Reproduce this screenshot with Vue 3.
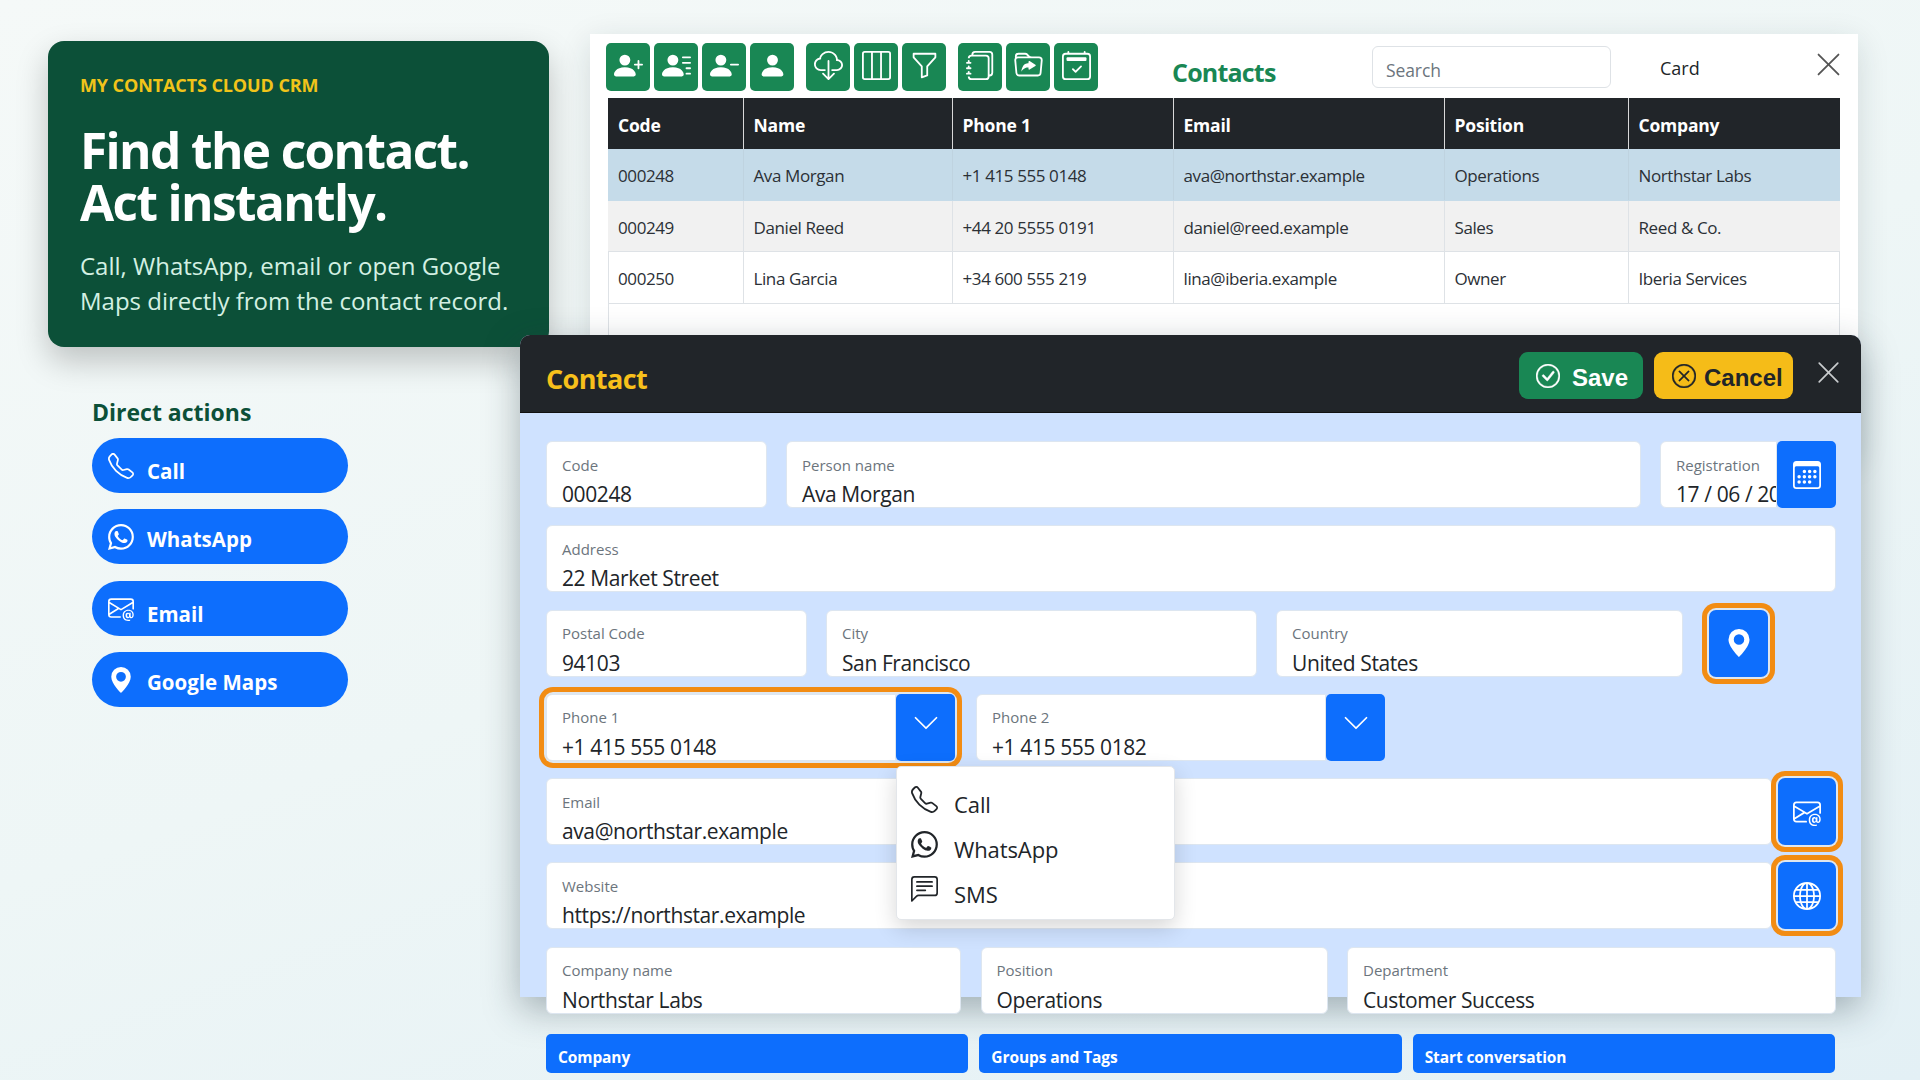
<script setup>
import { h } from "vue";

const circle = "M8 15A7 7 0 1 1 8 1a7 7 0 0 1 0 14zm0 1A8 8 0 1 0 8 0a8 8 0 0 0 0 16z";
const personBase = "M1 14s-1 0-1-1 1-4 6-4 6 3 6 4-1 1-1 1H1zm5-6a3 3 0 1 0 0-6 3 3 0 0 0 0 6z";

const icons = {
  phone: ["M3.654 1.328a.678.678 0 0 0-1.015-.063L1.605 2.3c-.483.484-.661 1.169-.45 1.77a17.568 17.568 0 0 0 4.168 6.608 17.569 17.569 0 0 0 6.608 4.168c.601.211 1.286.033 1.77-.45l1.034-1.034a.678.678 0 0 0-.063-1.015l-2.307-1.794a.678.678 0 0 0-.58-.122l-2.19.547a1.745 1.745 0 0 1-1.657-.459L5.482 8.062a1.745 1.745 0 0 1-.46-1.657l.548-2.19a.678.678 0 0 0-.122-.58L3.654 1.328zM1.884.511a1.745 1.745 0 0 1 2.612.163L6.29 2.98c.329.423.445.974.315 1.494l-.547 2.19a.678.678 0 0 0 .178.643l2.457 2.457a.678.678 0 0 0 .644.178l2.189-.547a1.745 1.745 0 0 1 1.494.315l2.306 1.794c.829.645.905 1.87.163 2.611l-1.034 1.034c-.74.74-1.846 1.065-2.877.702a18.634 18.634 0 0 1-7.01-4.42 18.634 18.634 0 0 1-4.42-7.009c-.362-1.03-.037-2.137.703-2.877L1.885.511z"],
  whatsapp: ["M13.601 2.326A7.854 7.854 0 0 0 7.994 0C3.627 0 .068 3.558.064 7.926c0 1.399.366 2.76 1.057 3.965L0 16l4.204-1.102a7.933 7.933 0 0 0 3.79.965h.004c4.368 0 7.926-3.558 7.93-7.93A7.898 7.898 0 0 0 13.6 2.326zM7.994 14.521a6.573 6.573 0 0 1-3.356-.92l-.24-.144-2.494.654.666-2.433-.156-.251a6.56 6.56 0 0 1-1.007-3.505c0-3.626 2.957-6.584 6.591-6.584a6.56 6.56 0 0 1 4.66 1.931 6.557 6.557 0 0 1 1.928 4.66c-.004 3.639-2.961 6.592-6.592 6.592zm3.615-4.934c-.197-.099-1.17-.578-1.353-.646-.182-.065-.315-.099-.445.099-.133.197-.513.646-.627.775-.114.133-.232.148-.43.05-.197-.1-.836-.308-1.592-.985-.59-.525-.985-1.175-1.103-1.372-.114-.198-.011-.304.088-.403.087-.088.197-.232.296-.346.1-.114.133-.198.198-.33.065-.134.034-.248-.015-.347-.05-.099-.445-1.076-.612-1.47-.16-.389-.323-.335-.445-.34-.114-.007-.247-.007-.38-.007a.729.729 0 0 0-.529.247c-.182.198-.691.677-.691 1.654 0 .977.71 1.916.81 2.049.098.133 1.394 2.132 3.383 2.992.47.205.84.326 1.129.418.475.152.904.129 1.246.08.38-.058 1.171-.48 1.338-.943.164-.464.164-.86.114-.943-.049-.084-.182-.133-.38-.232z"],
  email: [
    "M2 2a2 2 0 0 0-2 2v8.01A2 2 0 0 0 2 14h5.5a.5.5 0 0 0 0-1H2a1 1 0 0 1-.966-.741l5.64-3.471L8 9.583l7-4.2V8.5a.5.5 0 0 0 1 0V4a2 2 0 0 0-2-2H2Zm3.708 6.208L1 11.105V5.383l4.708 2.825ZM1 4.217V4a1 1 0 0 1 1-1h12a1 1 0 0 1 1 1v.217l-7 4.2-7-4.2Z",
    "M14.247 14.269c1.01 0 1.587-.857 1.587-2.025v-.21C15.834 10.43 14.64 9 12.52 9h-.035C10.42 9 9 10.36 9 12.432v.214C9 14.82 10.438 16 12.358 16h.044c.594 0 1.018-.074 1.237-.175v-.73c-.245.11-.673.18-1.18.18h-.044c-1.334 0-2.571-.788-2.571-2.655v-.157c0-1.657 1.058-2.724 2.64-2.724h.04c1.535 0 2.484 1.05 2.484 2.326v.118c0 .975-.324 1.39-.639 1.39-.232 0-.41-.148-.41-.42v-2.19h-.906v.569h-.03c-.084-.298-.368-.63-.954-.63-.778 0-1.259.555-1.259 1.4v.528c0 .892.49 1.434 1.26 1.434.471 0 .896-.227 1.014-.643h.043c.118.42.617.648 1.12.648Zm-2.453-1.588v-.227c0-.546.227-.791.573-.791.297 0 .572.192.572.708v.367c0 .573-.253.744-.564.744-.354 0-.581-.215-.581-.8Z",
  ],
  pin: ["M8 16s6-5.686 6-10A6 6 0 0 0 2 6c0 4.314 6 10 6 10zm0-7a3 3 0 1 1 0-6 3 3 0 0 1 0 6z"],
  chevron: ["M1.646 4.646a.5.5 0 0 1 .708 0L8 10.293l5.646-5.647a.5.5 0 0 1 .708.708l-6 6a.5.5 0 0 1-.708 0l-6-6a.5.5 0 0 1 0-.708z"],
  close: ["M2.146 2.854a.5.5 0 1 1 .708-.708L8 7.293l5.146-5.147a.5.5 0 0 1 .708.708L8.707 8l5.147 5.146a.5.5 0 0 1-.708.708L8 8.707l-5.146 5.147a.5.5 0 0 1-.708-.708L7.293 8 2.146 2.854Z"],
  sms: [
    "M14 1a1 1 0 0 1 1 1v8a1 1 0 0 1-1 1H4.414A2 2 0 0 0 3 11.586l-2 2V2a1 1 0 0 1 1-1h12zM2 0a2 2 0 0 0-2 2v12.793a.5.5 0 0 0 .854.353l2.853-2.853A1 1 0 0 1 4.414 12H14a2 2 0 0 0 2-2V2a2 2 0 0 0-2-2H2z",
    "M3 3.5a.5.5 0 0 1 .5-.5h9a.5.5 0 0 1 0 1h-9a.5.5 0 0 1-.5-.5zM3 6a.5.5 0 0 1 .5-.5h9a.5.5 0 0 1 0 1h-9A.5.5 0 0 1 3 6zm0 2.5a.5.5 0 0 1 .5-.5h5a.5.5 0 0 1 0 1h-5a.5.5 0 0 1-.5-.5z",
  ],
  globe: ["M0 8a8 8 0 1 1 16 0A8 8 0 0 1 0 8zm7.5-6.923c-.67.204-1.335.82-1.887 1.855A7.97 7.97 0 0 0 5.145 4H7.5V1.077zM4.09 4a9.267 9.267 0 0 1 .64-1.539 6.7 6.7 0 0 1 .597-.933A7.025 7.025 0 0 0 2.255 4H4.09zm-.582 3.5c.03-.877.138-1.718.312-2.5H1.674a6.958 6.958 0 0 0-.656 2.5h2.49zM4.847 5a12.5 12.5 0 0 0-.338 2.5H7.5V5H4.847zM8.5 5v2.5h2.99a12.495 12.495 0 0 0-.337-2.5H8.5zM4.51 8.5a12.5 12.5 0 0 0 .337 2.5H7.5V8.5H4.51zm3.99 0V11h2.653c.187-.765.306-1.608.338-2.5H8.5zM5.145 12c.138.386.295.744.468 1.068.552 1.035 1.218 1.65 1.887 1.855V12H5.145zm.182 2.472a6.696 6.696 0 0 1-.597-.933A9.268 9.268 0 0 1 4.09 12H2.255a7.024 7.024 0 0 0 3.072 2.472zM3.82 11a13.652 13.652 0 0 1-.312-2.5h-2.49c.062.89.291 1.733.656 2.5H3.82zm6.853 3.472A7.024 7.024 0 0 0 13.745 12H11.91a9.27 9.27 0 0 1-.64 1.539 6.688 6.688 0 0 1-.597.933zM8.5 12v2.923c.67-.204 1.335-.82 1.887-1.855.173-.324.33-.682.468-1.068H8.5zm3.68-1h2.146c.365-.767.594-1.61.656-2.5h-2.49a13.65 13.65 0 0 1-.312 2.5zm2.802-3.5a6.959 6.959 0 0 0-.656-2.5H12.18c.174.782.282 1.623.312 2.5h2.49zM11.27 2.461c.247.464.462.98.64 1.539h1.835a7.024 7.024 0 0 0-3.072-2.472c.218.284.418.598.597.933zM10.855 4a7.966 7.966 0 0 0-.468-1.068C9.835 1.897 9.17 1.282 8.5 1.077V4h2.355z"],
  calendar: [
    "M14 0H2a2 2 0 0 0-2 2v12a2 2 0 0 0 2 2h12a2 2 0 0 0 2-2V2a2 2 0 0 0-2-2zM1 3.857C1 3.384 1.448 3 2 3h12c.552 0 1 .384 1 .857v10.286c0 .473-.448.857-1 .857H2c-.552 0-1-.384-1-.857V3.857z",
    "M6.5 7a1 1 0 1 0 0-2 1 1 0 0 0 0 2zm3 0a1 1 0 1 0 0-2 1 1 0 0 0 0 2zm3 0a1 1 0 1 0 0-2 1 1 0 0 0 0 2zm-9 3a1 1 0 1 0 0-2 1 1 0 0 0 0 2zm3 0a1 1 0 1 0 0-2 1 1 0 0 0 0 2zm3 0a1 1 0 1 0 0-2 1 1 0 0 0 0 2zm3 0a1 1 0 1 0 0-2 1 1 0 0 0 0 2zm-9 3a1 1 0 1 0 0-2 1 1 0 0 0 0 2zm3 0a1 1 0 1 0 0-2 1 1 0 0 0 0 2zm3 0a1 1 0 1 0 0-2 1 1 0 0 0 0 2z",
  ],
  check: [circle, "M10.97 4.97a.235.235 0 0 0-.02.022L7.477 9.417 5.384 7.323a.75.75 0 0 0-1.06 1.06L6.97 11.03a.75.75 0 0 0 1.079-.02l3.992-4.99a.75.75 0 0 0-1.071-1.05z"],
  cancel: [circle, "M4.646 4.646a.5.5 0 0 1 .708 0L8 7.293l2.646-2.647a.5.5 0 0 1 .708.708L8.707 8l2.647 2.646a.5.5 0 0 1-.708.708L8 8.707l-2.646 2.647a.5.5 0 0 1-.708-.708L7.293 8 4.646 5.354a.5.5 0 0 1 0-.708z"],
  personPlus: [personBase, "M13.5 5a.5.5 0 0 1 .5.5V7h1.5a.5.5 0 0 1 0 1H14v1.5a.5.5 0 0 1-1 0V8h-1.5a.5.5 0 0 1 0-1H13V5.5a.5.5 0 0 1 .5-.5z"],
  personLines: ["M6 8a3 3 0 1 0 0-6 3 3 0 0 0 0 6zm-5 6s-1 0-1-1 1-4 6-4 6 3 6 4-1 1-1 1H1zM11 3.5a.5.5 0 0 1 .5-.5h4a.5.5 0 0 1 0 1h-4a.5.5 0 0 1-.5-.5zm.5 2.5a.5.5 0 0 0 0 1h4a.5.5 0 0 0 0-1h-4zm2 3a.5.5 0 0 0 0 1h2a.5.5 0 0 0 0-1h-2zm0 3a.5.5 0 0 0 0 1h2a.5.5 0 0 0 0-1h-2z"],
  personDash: [personBase, "M11 7.5a.5.5 0 0 1 .5-.5h4a.5.5 0 0 1 0 1h-4a.5.5 0 0 1-.5-.5z"],
  person: ["M3 14s-1 0-1-1 1-4 6-4 6 3 6 4-1 1-1 1H3Zm5-6a3 3 0 1 0 0-6 3 3 0 0 0 0 6Z"],
  cloud: [
    "M4.406 1.342A5.53 5.53 0 0 1 8 0c2.69 0 4.923 2 5.166 4.579C14.758 4.804 16 6.137 16 7.773 16 9.569 14.502 11 12.687 11H10a.5.5 0 0 1 0-1h2.688C13.979 10 15 8.988 15 7.773c0-1.216-1.02-2.228-2.313-2.228h-.5v-.5C12.188 2.825 10.328 1 8 1a4.53 4.53 0 0 0-2.941 1.1c-.757.652-1.153 1.438-1.153 2.055v.448l-.445.049C2.064 4.805 1 5.952 1 7.318 1 8.785 2.23 10 3.781 10H6a.5.5 0 0 1 0 1H3.781C1.708 11 0 9.366 0 7.318c0-1.763 1.266-3.223 2.942-3.593.143-.863.698-1.723 1.464-2.383z",
    "M7.646 15.854a.5.5 0 0 0 .708 0l3-3a.5.5 0 0 0-.708-.708L8.5 14.293V5.5a.5.5 0 0 0-1 0v8.793l-2.146-2.147a.5.5 0 0 0-.708.708l3 3z",
  ],
  columns: ["M0 1.5A1.5 1.5 0 0 1 1.5 0h13A1.5 1.5 0 0 1 16 1.5v13a1.5 1.5 0 0 1-1.5 1.5h-13A1.5 1.5 0 0 1 0 14.5v-13zM1.5 1a.5.5 0 0 0-.5.5v13a.5.5 0 0 0 .5.5H5V1H1.5zM10 15V1H6v14h4zm1 0h3.5a.5.5 0 0 0 .5-.5v-13a.5.5 0 0 0-.5-.5H11v14z"],
  funnel: ["M1.5 1.5A.5.5 0 0 1 2 1h12a.5.5 0 0 1 .5.5v2a.5.5 0 0 1-.128.334L10 8.692V13.5a.5.5 0 0 1-.342.474l-3 1A.5.5 0 0 1 6 14.5V8.692L1.628 3.834A.5.5 0 0 1 1.5 3.5v-2zm1 .5v1.308l4.372 4.858A.5.5 0 0 1 7 8.5v5.306l2-.666V8.5a.5.5 0 0 1 .128-.334L13.5 3.308V2h-11z"],
  journals: [
    "M5 0h8a2 2 0 0 1 2 2v10a2 2 0 0 1-2 2 2 2 0 0 1-2 2H3a2 2 0 0 1-2-2h1a1 1 0 0 0 1 1h8a1 1 0 0 0 1-1V4a1 1 0 0 0-1-1H3a1 1 0 0 0-1 1H1a2 2 0 0 1 2-2h8a2 2 0 0 1 2 2v9a1 1 0 0 0 1-1V2a1 1 0 0 0-1-1H5a1 1 0 0 0-1 1H3a2 2 0 0 1 2-2z",
    "M1 6v-.5a.5.5 0 0 1 1 0V6h.5a.5.5 0 0 1 0 1h-2a.5.5 0 0 1 0-1H1zm0 3v-.5a.5.5 0 0 1 1 0V9h.5a.5.5 0 0 1 0 1h-2a.5.5 0 0 1 0-1H1zm0 2.5v.5H.5a.5.5 0 0 0 0 1h2a.5.5 0 0 0 0-1H2v-.5a.5.5 0 0 0-1 0z",
  ],
  folder: [
    "m11.798 8.271-3.182 1.97c-.27.166-.616-.036-.616-.372V9.1s-2.571-.3-4 2.4c.571-4.8 3.143-4.8 4-4.8v-.769c0-.336.346-.538.616-.371l3.182 1.969c.27.166.27.576 0 .742z",
    "m.5 3 .04.87a1.99 1.99 0 0 0-.342 1.311l.637 7A2 2 0 0 0 2.826 14h10.348a2 2 0 0 0 1.991-1.819l.637-7A2 2 0 0 0 13.81 3H9.828a2 2 0 0 1-1.414-.586l-.828-.828A2 2 0 0 0 6.172 1H2.5a2 2 0 0 0-2 2zm.694 2.09A1 1 0 0 1 2.19 4h11.62a1 1 0 0 1 .996 1.09l-.636 7a1 1 0 0 1-.996.91H2.826a1 1 0 0 1-.995-.91l-.637-7zM6.172 2a1 1 0 0 1 .707.293L7.586 3H2.19c-.24 0-.47.042-.683.12L1.5 2.98a1 1 0 0 1 1-.98h3.672z",
  ],
  calendarCheck: [
    "M10.854 8.146a.5.5 0 0 1 0 .708l-3 3a.5.5 0 0 1-.708 0l-1.5-1.5a.5.5 0 0 1 .708-.708L7.5 10.793l2.646-2.647a.5.5 0 0 1 .708 0z",
    "M3.5 0a.5.5 0 0 1 .5.5V1h8V.5a.5.5 0 0 1 1 0V1h1a2 2 0 0 1 2 2v11a2 2 0 0 1-2 2H2a2 2 0 0 1-2-2V3a2 2 0 0 1 2-2h1V.5a.5.5 0 0 1 .5-.5zM2 2a1 1 0 0 0-1 1v11a1 1 0 0 0 1 1h12a1 1 0 0 0 1-1V3a1 1 0 0 0-1-1H2z",
    "M2.5 4a.5.5 0 0 1 .5-.5h10a.5.5 0 0 1 .5.5v1a.5.5 0 0 1-.5.5H3a.5.5 0 0 1-.5-.5V4z",
  ],
};

const Bi = ({ name }) =>
  h(
    "svg",
    { viewBox: "0 0 16 16", fill: "currentColor" },
    icons[name].map((d) => h("path", { d }))
  );

const actions = [
  { label: "Call", icon: "phone", low: true },
  { label: "WhatsApp", icon: "whatsapp", low: false },
  { label: "Email", icon: "email", low: true },
  { label: "Google Maps", icon: "pin", low: false },
];

const toolGroups = [
  ["personPlus", "personLines", "personDash", "person"],
  ["cloud", "columns", "funnel"],
  ["journals", "folder", "calendarCheck"],
];

const columns = ["Code", "Name", "Phone 1", "Email", "Position", "Company"];
const colWidths = [135, 209, 221, 271, 184, 212];
const contacts = [
  ["000248", "Ava Morgan", "+1 415 555 0148", "ava@northstar.example", "Operations", "Northstar Labs"],
  ["000249", "Daniel Reed", "+44 20 5555 0191", "daniel@reed.example", "Sales", "Reed & Co."],
  ["000250", "Lina Garcia", "+34 600 555 219", "lina@iberia.example", "Owner", "Iberia Services"],
];

const phoneMenu = [
  { label: "Call", icon: "phone" },
  { label: "WhatsApp", icon: "whatsapp" },
  { label: "SMS", icon: "sms" },
];

const tabs = ["Company", "Groups and Tags", "Start conversation"];
</script>

<template>
  <div class="page">
    <aside class="left">
      <section class="hero">
        <div class="eyebrow">MY CONTACTS CLOUD CRM</div>
        <h1>Find the contact.<br />Act instantly.</h1>
        <p>Call, WhatsApp, email or open Google Maps directly from the contact record.</p>
      </section>

      <section class="direct">
        <h2>Direct actions</h2>
        <div class="direct-list">
          <button v-for="a in actions" :key="a.label" class="pill">
            <Bi :name="a.icon" class="pill-icon" />
            <span :class="{ low: a.low }">{{ a.label }}</span>
          </button>
        </div>
      </section>
    </aside>

    <main class="panel">
      <div class="toolbar">
        <div v-for="(group, i) in toolGroups" :key="i" class="tool-group">
          <button v-for="icon in group" :key="icon" class="tool">
            <Bi :name="icon" class="tool-icon" />
          </button>
        </div>
        <div class="panel-title">Contacts</div>
        <input class="search" type="text" placeholder="Search" />
        <span class="card-link">Card</span>
        <Bi name="close" class="panel-close" />
      </div>

      <div class="table-wrap">
        <table>
          <colgroup>
            <col v-for="(w, i) in colWidths" :key="i" :style="{ width: w + 'px' }" />
          </colgroup>
          <thead>
            <tr>
              <th v-for="c in columns" :key="c">{{ c }}</th>
            </tr>
          </thead>
          <tbody>
            <tr v-for="(row, i) in contacts" :key="row[0]" :class="'row-' + i">
              <td v-for="(cell, j) in row" :key="j">{{ cell }}</td>
            </tr>
          </tbody>
        </table>
      </div>
    </main>

    <div class="dialog-layer">
      <div class="dialog">
        <header class="dialog-head">
          <div class="dialog-title">Contact</div>
          <button class="btn-save"><Bi name="check" class="btn-icon" /><span>Save</span></button>
          <button class="btn-cancel"><Bi name="cancel" class="btn-icon" /><span>Cancel</span></button>
          <Bi name="close" class="dialog-close" />
        </header>

        <div class="form">
          <div class="row r1">
            <div class="field"><label>Code</label><span class="val">000248</span></div>
            <div class="field"><label>Person name</label><span class="val">Ava Morgan</span></div>
            <div class="group">
              <div class="field"><label>Registration</label><span class="val">17 / 06 / 2025</span></div>
              <button class="square"><Bi name="calendar" class="square-icon" /></button>
            </div>
          </div>

          <div class="row">
            <div class="field"><label>Address</label><span class="val">22 Market Street</span></div>
          </div>

          <div class="row r3">
            <div class="field"><label>Postal Code</label><span class="val">94103</span></div>
            <div class="field"><label>City</label><span class="val">San Francisco</span></div>
            <div class="field"><label>Country</label><span class="val">United States</span></div>
            <button class="square ringed map"><Bi name="pin" class="square-icon" /></button>
          </div>

          <div class="row r4">
            <div class="group ringed">
              <div class="field"><label>Phone 1</label><span class="val">+1 415 555 0148</span></div>
              <button class="square"><Bi name="chevron" class="square-icon chev" /></button>
              <div class="menu">
                <div v-for="m in phoneMenu" :key="m.label" class="menu-item">
                  <Bi :name="m.icon" class="menu-icon" />
                  <span>{{ m.label }}</span>
                </div>
              </div>
            </div>
            <div class="group">
              <div class="field"><label>Phone 2</label><span class="val">+1 415 555 0182</span></div>
              <button class="square"><Bi name="chevron" class="square-icon chev" /></button>
            </div>
          </div>

          <div class="row r5">
            <div class="field"><label>Email</label><span class="val">ava@northstar.example</span></div>
            <button class="square ringed"><Bi name="email" class="square-icon" /></button>
          </div>

          <div class="row r5">
            <div class="field"><label>Website</label><span class="val">https://northstar.example</span></div>
            <button class="square ringed"><Bi name="globe" class="square-icon" /></button>
          </div>

          <div class="row r7">
            <div class="field"><label>Company name</label><span class="val">Northstar Labs</span></div>
            <div class="field"><label>Position</label><span class="val">Operations</span></div>
            <div class="field"><label>Department</label><span class="val">Customer Success</span></div>
          </div>
        </div>
      </div>

      <div class="tabs">
        <button v-for="t in tabs" :key="t" class="tab">{{ t }}</button>
      </div>
    </div>
  </div>
</template>

<style>
html,
body {
  margin: 0;
  overflow: hidden;
}
</style>

<style scoped>
.page {
  position: relative;
  width: 1920px;
  height: 1080px;
  display: flex;
  overflow: hidden;
  background: linear-gradient(160deg, #f5f9f8 0%, #eef6f6 50%, #e3f0f5 100%);
  font-family: "Open Sans", "Noto Sans", sans-serif;
  color: #212529;
}

button {
  font-family: inherit;
  border: none;
  padding: 0;
  cursor: pointer;
}

/* left column */
.left {
  width: 590px;
  flex: none;
  box-sizing: border-box;
  padding: 41px 0 0 48px;
}

.hero {
  width: 501px;
  height: 306px;
  box-sizing: border-box;
  padding: 32px 32px 0;
  background: #0c5038;
  border-radius: 16px;
  box-shadow: 0 14px 32px rgba(0, 0, 0, 0.22);
}

.eyebrow {
  font-size: 18px;
  line-height: 24px;
  font-weight: 700;
  color: #f1c41a;
  letter-spacing: -0.1px;
}

.hero h1 {
  margin: 28px 0 0;
  font-size: 49.5px;
  line-height: 51.5px;
  font-weight: 700;
  letter-spacing: -1.6px;
  color: #fff;
}

.hero p {
  margin: 19.5px 0 0;
  font-size: 24px;
  line-height: 35.5px;
  color: #d4f0e3;
}

.direct {
  padding: 50px 0 0 44px;
}

.direct h2 {
  margin: 0 0 10px;
  font-size: 23px;
  line-height: 31px;
  font-weight: 700;
  color: #0c5038;
}

.direct-list {
  display: flex;
  flex-direction: column;
  gap: 16.4px;
}

.pill {
  width: 256px;
  height: 55px;
  display: flex;
  align-items: center;
  gap: 13px;
  padding-left: 16px;
  background: #0d6efd;
  color: #fff;
  border-radius: 28px;
  font-size: 20.5px;
  font-weight: 700;
}

.pill-icon {
  width: 26px;
  height: 26px;
  flex: none;
}

.pill span {
  padding-top: 4px;
}

.pill span.low {
  padding-top: 11px;
}

/* contacts panel */
.panel {
  width: 1268px;
  height: 420px;
  margin-top: 34px;
  flex: none;
  background: #fff;
  box-shadow: 0 8px 30px rgba(20, 40, 50, 0.14);
}

.toolbar {
  height: 64px;
  display: flex;
  align-items: center;
  padding: 2px 0 0 16px;
  box-sizing: border-box;
}

.tool-group {
  display: flex;
  gap: 4px;
  margin-right: 12px;
}

.tool {
  width: 44px;
  height: 48px;
  display: flex;
  align-items: center;
  justify-content: center;
  padding-bottom: 4px;
  box-sizing: border-box;
  background: #198754;
  color: #fff;
  border-radius: 5px;
}

.tool-icon {
  width: 29px;
  height: 29px;
}

.panel-title {
  width: 200px;
  margin-left: 62px;
  padding-top: 10px;
  font-size: 25px;
  font-weight: 700;
  letter-spacing: -0.8px;
  color: #198754;
}

.search {
  width: 239px;
  height: 42px;
  box-sizing: border-box;
  padding: 6px 13px 0;
  border: 1px solid #dee2e6;
  border-radius: 6px;
  font-family: inherit;
  font-size: 17.5px;
  letter-spacing: -0.1px;
  color: #212529;
  outline: none;
}

.search::placeholder {
  color: #6c757d;
}

.card-link {
  width: 154px;
  margin-left: 49px;
  padding-top: 2px;
  font-size: 18px;
}

.panel-close {
  width: 29px;
  height: 29px;
  margin-bottom: 6px;
  color: #555;
}

.table-wrap {
  margin: 0 18px;
  height: 320px;
  border-left: 1px solid #dee2e6;
  border-right: 1px solid #dee2e6;
}

table {
  width: 1232px;
  margin-left: -1px;
  table-layout: fixed;
  border-collapse: collapse;
  font-size: 17px;
  letter-spacing: -0.4px;
}

th {
  height: 49px;
  padding: 2px 10px 0;
  background: #212529;
  color: #fff;
  font-size: 17.5px;
  font-weight: 700;
  text-align: left;
  letter-spacing: -0.2px;
  border-right: 1px solid #d9d9d9;
}

th:last-child,
td:last-child {
  border-right: none;
}

td {
  height: 47.6px;
  padding: 3px 10px 0;
  border-right: 1px solid #dee2e6;
  border-bottom: 1px solid #dee2e6;
  color: #2b3036;
}

.row-0 td {
  background: #c5dbe9;
  border-color: #c5dbe9;
  border-right-color: #bfd3e0;
}

.row-1 td {
  background: #f1f1f1;
}

/* contact dialog */
.dialog-layer {
  position: absolute;
  left: 520px;
  top: 335px;
  width: 1341px;
}

.dialog {
  height: 662px;
  background: #cfe2ff;
  border-radius: 10px 10px 0 0;
  box-shadow: 0 12px 36px rgba(30, 50, 60, 0.36);
}

.dialog-head {
  height: 78px;
  box-sizing: border-box;
  display: flex;
  align-items: center;
  padding: 0 19.5px 0 26px;
  background: #212529;
  border-radius: 10px 10px 0 0;
  border-bottom: 1px solid #111;
}

.dialog-title {
  flex: 1;
  padding-top: 10px;
  font-size: 27px;
  font-weight: 700;
  letter-spacing: -0.6px;
  color: #f7c01b;
}

.btn-save,
.btn-cancel {
  height: 47px;
  margin-top: 4px;
  display: flex;
  align-items: center;
  border-radius: 9px;
  font-family: "Liberation Sans", Arial, sans-serif;
  font-size: 24px;
  font-weight: 700;
}

.btn-save {
  width: 124px;
  padding-left: 17px;
  gap: 12px;
  background: #198754;
  color: #fff;
}

.btn-cancel {
  width: 139px;
  margin-left: 11px;
  padding-left: 18px;
  gap: 8px;
  background: #f5bc18;
  color: #212529;
}

.btn-icon {
  width: 24px;
  height: 24px;
  flex: none;
  stroke: currentColor;
  stroke-width: 0.25;
}

.btn-save span,
.btn-cancel span {
  padding-top: 5px;
}

.dialog-close {
  width: 27px;
  height: 27px;
  margin-left: 21.5px;
  margin-bottom: 2px;
  color: #c9ccce;
}

.form {
  padding: 28px 25px 0 26px;
  display: flex;
  flex-direction: column;
  gap: 17.3px;
}

.row {
  display: grid;
  grid-template-columns: 1fr;
  gap: 19px;
  height: 67px;
}

.r1 {
  grid-template-columns: 221px 855px minmax(0, 1fr);
}

.r3 {
  grid-template-columns: 261px 431px 407px 60px;
}

.r4 {
  grid-template-columns: 409px 409px;
  gap: 21px;
}

.r5 {
  grid-template-columns: 1fr 58px;
  gap: 6px;
}

.r5 .square {
  width: 58px;
}

.r7 {
  grid-template-columns: 415px 347px 1fr;
  gap: 19.5px;
}

.field {
  min-width: 0;
  height: 67px;
  box-sizing: border-box;
  padding: 12.5px 15px 0;
  background: #fff;
  border: 1px solid #dde6f0;
  border-radius: 6px;
  overflow: hidden;
  white-space: nowrap;
}

.field label {
  display: block;
  font-size: 15px;
  line-height: 21px;
  color: #6c757d;
}

.field .val {
  display: block;
  margin-top: 4.5px;
  font-size: 21px;
  line-height: 28px;
  letter-spacing: -0.4px;
}

.group {
  position: relative;
  display: flex;
  min-width: 0;
  border-radius: 6px;
}

.group .field {
  flex: 1;
  border-radius: 6px 0 0 6px;
}

.square {
  width: 59px;
  height: 67px;
  flex: none;
  display: flex;
  align-items: center;
  justify-content: center;
  background: #0d6efd;
  color: #fff;
  border-radius: 5px;
}

.square-icon {
  width: 28px;
  height: 28px;
}

.chev {
  margin-bottom: 8px;
}

.ringed {
  border-radius: 7px;
  box-shadow: 0 0 0 2px #dfe7ef, 0 0 0 7px #f28c13;
}

.map {
  margin-left: 7px;
}

.menu {
  position: absolute;
  left: 350px;
  top: 72px;
  z-index: 5;
  width: 279px;
  height: 154px;
  box-sizing: border-box;
  padding-top: 16px;
  background: #fff;
  border: 1px solid #e3e6ea;
  border-radius: 5px;
  box-shadow: 0 8px 22px rgba(0, 0, 0, 0.16);
}

.menu-item {
  height: 45px;
  display: flex;
  align-items: flex-start;
  gap: 16px;
  padding-left: 14px;
  font-size: 22px;
  letter-spacing: -0.1px;
}

.menu-icon {
  width: 27px;
  height: 27px;
  margin-top: 3px;
  flex: none;
}

.menu-item span {
  padding-top: 6px;
}

/* bottom buttons, under the dialog */
.tabs {
  display: grid;
  grid-template-columns: repeat(3, 1fr);
  gap: 11px;
  margin-top: 37px;
  padding: 0 26px;
}

.tab {
  height: 38.5px;
  padding: 7px 0 0 12px;
  text-align: left;
  background: #0d6efd;
  color: #fff;
  border-radius: 5px;
  font-size: 15.5px;
  font-weight: 700;
  letter-spacing: -0.1px;
}
</style>
